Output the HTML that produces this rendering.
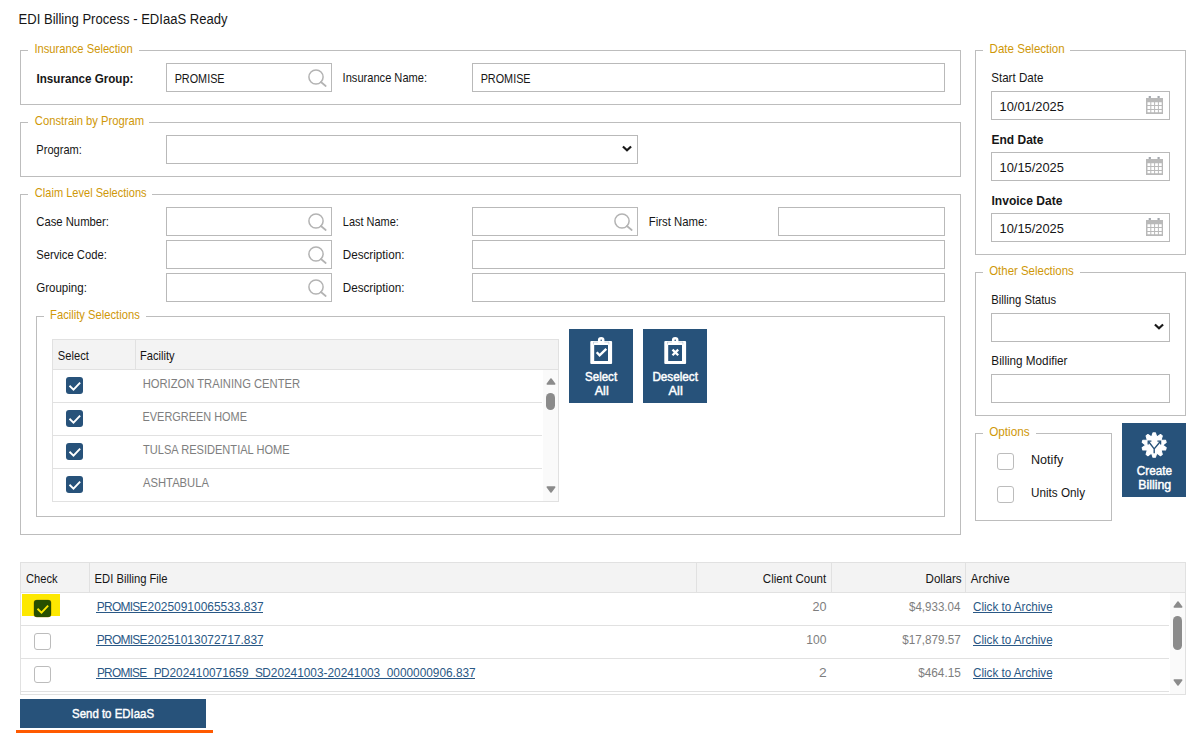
<!DOCTYPE html>
<html lang="en">
<head>
<meta charset="utf-8">
<title>EDI Billing Process - EDIaaS Ready</title>
<style>
html,body{margin:0;padding:0;background:#fff}
body{width:1199px;height:736px;position:relative;overflow:hidden;font-family:"Liberation Sans", sans-serif;font-size:13px;color:#161616}
.a{position:absolute;box-sizing:border-box}
.t{position:absolute;left:0;margin:0;white-space:pre;transform-origin:0 0;line-height:16px;height:16px;font-size:13px;font-weight:400;text-decoration:none}
.u{position:absolute;height:1px;background:#2a5885}
.fs{position:absolute;box-sizing:border-box;border:1px solid #bdbdbd}
.lg{position:absolute;background:#fff;height:3px}
.in{position:absolute;box-sizing:border-box;border:1px solid #b9b9b9;background:#fff;height:29px}
.grid{position:absolute;box-sizing:border-box;border:1px solid #e1e1e1;background:#fff}
.hd{position:absolute;box-sizing:border-box;background:#f3f3f3;border:1px solid #e1e1e1}
.ln{position:absolute;background:#e1e1e1}
.track{position:absolute;background:#fafafa}
.cb{position:absolute;box-sizing:border-box;width:17px;height:17px;border-radius:3px}
.cb.on{background:#27527a}
.cb.off{background:#fff;border:1px solid #bcbcbc}
.btn{position:absolute;background:#27527a}
svg{position:absolute;overflow:visible}
</style>
</head>
<body>
<header id="title">
<h1 class="t" style="top:11px;transform:translateX(18.56px) scaleX(0.9323);color:#161616;font-size:14px;">EDI Billing Process - EDIaaS Ready</h1>
</header>
<section id="ins" aria-label="Insurance Selection">
<div class="fs" style="left:20px;top:50px;width:941px;height:55px"></div>
<div class="lg" style="left:28px;top:49px;width:111px"></div>
<div class="in input" style="left:166px;top:63px;width:166px"></div>
<svg class="ico-search" style="left:305.65px;top:66.50px" width="22" height="22" viewBox="0 0 22 22"><circle cx="10" cy="10" r="7.1" fill="none" stroke="#b3b3b3" stroke-width="1.5"/><path d="M14.9 15 L19.7 19" stroke="#b3b3b3" stroke-width="1.7" fill="none" stroke-linecap="round"/></svg>
<div class="in input" style="left:472px;top:63px;width:473px"></div>
<span class="t legend" style="top:41px;transform:translateX(34.41px) scaleX(0.8613);color:#cf9808;">Insurance Selection</span>
<span class="t label" style="top:71px;transform:translateX(36.50px) scaleX(0.8949);color:#161616;font-weight:700;">Insurance Group:</span>
<span class="t value" style="top:71px;transform:translateX(174.64px) scaleX(0.8332);color:#161616;">PROMISE</span>
<span class="t label" style="top:70px;transform:translateX(342.60px) scaleX(0.8529);color:#161616;">Insurance Name:</span>
<span class="t value" style="top:71px;transform:translateX(480.64px) scaleX(0.8332);color:#161616;">PROMISE</span>
</section>
<section id="prog" aria-label="Constrain by Program">
<div class="fs" style="left:20px;top:122px;width:941px;height:55px"></div>
<div class="lg" style="left:28px;top:121px;width:121px"></div>
<div class="in select" style="left:166px;top:135px;width:472px"></div>
<svg class="ico-chevron" style="left:620.6px;top:145.0px" width="12" height="8" viewBox="0 0 12 8"><path d="M1.93 1.5 L6 5.3 L10.07 1.5" stroke="#1a1a1a" stroke-width="2.2" fill="none"/></svg>
<span class="t legend" style="top:113px;transform:translateX(34.85px) scaleX(0.8637);color:#cf9808;">Constrain by Program</span>
<span class="t label" style="top:142px;transform:translateX(36.34px) scaleX(0.8508);color:#161616;">Program:</span>
</section>
<section id="claim" aria-label="Claim Level Selections">
<div class="fs" style="left:20px;top:194px;width:941px;height:341px"></div>
<div class="lg" style="left:28px;top:193px;width:124px"></div>
<div class="in input" style="left:166px;top:207px;width:166px"></div>
<svg class="ico-search" style="left:305.65px;top:210.50px" width="22" height="22" viewBox="0 0 22 22"><circle cx="10" cy="10" r="7.1" fill="none" stroke="#b3b3b3" stroke-width="1.5"/><path d="M14.9 15 L19.7 19" stroke="#b3b3b3" stroke-width="1.7" fill="none" stroke-linecap="round"/></svg>
<div class="in input" style="left:472px;top:207px;width:166px"></div>
<svg class="ico-search" style="left:611.65px;top:210.50px" width="22" height="22" viewBox="0 0 22 22"><circle cx="10" cy="10" r="7.1" fill="none" stroke="#b3b3b3" stroke-width="1.5"/><path d="M14.9 15 L19.7 19" stroke="#b3b3b3" stroke-width="1.7" fill="none" stroke-linecap="round"/></svg>
<div class="in input" style="left:778px;top:207px;width:167px"></div>
<div class="in input" style="left:166px;top:240px;width:166px"></div>
<svg class="ico-search" style="left:305.65px;top:243.50px" width="22" height="22" viewBox="0 0 22 22"><circle cx="10" cy="10" r="7.1" fill="none" stroke="#b3b3b3" stroke-width="1.5"/><path d="M14.9 15 L19.7 19" stroke="#b3b3b3" stroke-width="1.7" fill="none" stroke-linecap="round"/></svg>
<div class="in input" style="left:472px;top:240px;width:473px"></div>
<div class="in input" style="left:166px;top:273px;width:166px"></div>
<svg class="ico-search" style="left:305.65px;top:276.50px" width="22" height="22" viewBox="0 0 22 22"><circle cx="10" cy="10" r="7.1" fill="none" stroke="#b3b3b3" stroke-width="1.5"/><path d="M14.9 15 L19.7 19" stroke="#b3b3b3" stroke-width="1.7" fill="none" stroke-linecap="round"/></svg>
<div class="in input" style="left:472px;top:273px;width:473px"></div>
<span class="t legend" style="top:185px;transform:translateX(34.87px) scaleX(0.8498);color:#cf9808;">Claim Level Selections</span>
<span class="t label" style="top:214px;transform:translateX(36.25px) scaleX(0.8679);color:#161616;">Case Number:</span>
<span class="t label" style="top:214px;transform:translateX(342.83px) scaleX(0.8423);color:#161616;">Last Name:</span>
<span class="t label" style="top:214px;transform:translateX(648.79px) scaleX(0.8729);color:#161616;">First Name:</span>
<span class="t label" style="top:247px;transform:translateX(36.29px) scaleX(0.8632);color:#161616;">Service Code:</span>
<span class="t label" style="top:247px;transform:translateX(342.73px) scaleX(0.8986);color:#161616;">Description:</span>
<span class="t label" style="top:280px;transform:translateX(36.23px) scaleX(0.8870);color:#161616;">Grouping:</span>
<span class="t label" style="top:280px;transform:translateX(342.73px) scaleX(0.8986);color:#161616;">Description:</span>
</section>
<section id="fac" aria-label="Facility Selections">
<div class="fs" style="left:36px;top:316px;width:909px;height:201px"></div>
<div class="lg" style="left:44px;top:315px;width:102px"></div>
<div class="grid" style="left:52px;top:339px;width:507px;height:163px"></div>
<div class="hd" style="left:52px;top:339px;width:507px;height:31px"></div>
<div class="ln" style="left:135px;top:340px;width:1px;height:29px"></div>
<div class="track" style="left:543px;top:370px;width:15px;height:131px"></div>
<div class="ln" style="left:53px;top:402px;width:489px;height:1px"></div>
<div class="ln" style="left:53px;top:435px;width:489px;height:1px"></div>
<div class="ln" style="left:53px;top:468px;width:489px;height:1px"></div>
<div class="cb on" role="checkbox" aria-checked="true" style="left:66px;top:377px"><svg style="left:0;top:0" width="17" height="17" viewBox="0 0 17 17"><path d="M3.5 8.8 L7.5 12.6 L14.15 5.65" stroke="#fff" stroke-width="1.9" fill="none"/></svg></div>
<div class="cb on" role="checkbox" aria-checked="true" style="left:66px;top:410px"><svg style="left:0;top:0" width="17" height="17" viewBox="0 0 17 17"><path d="M3.5 8.8 L7.5 12.6 L14.15 5.65" stroke="#fff" stroke-width="1.9" fill="none"/></svg></div>
<div class="cb on" role="checkbox" aria-checked="true" style="left:66px;top:443px"><svg style="left:0;top:0" width="17" height="17" viewBox="0 0 17 17"><path d="M3.5 8.8 L7.5 12.6 L14.15 5.65" stroke="#fff" stroke-width="1.9" fill="none"/></svg></div>
<div class="cb on" role="checkbox" aria-checked="true" style="left:66px;top:476px"><svg style="left:0;top:0" width="17" height="17" viewBox="0 0 17 17"><path d="M3.5 8.8 L7.5 12.6 L14.15 5.65" stroke="#fff" stroke-width="1.9" fill="none"/></svg></div>
<svg style="left:545.9px;top:377.8px" width="10" height="7" viewBox="0 0 10 7"><path d="M5 1.1 L8.7 5.9 L1.3 5.9 Z" fill="#8b8b8b" stroke="#8b8b8b" stroke-width="1.6" stroke-linejoin="round"/></svg>
<div class="a" style="left:546.0px;top:392.7px;width:9px;height:17.1px;border-radius:4.5px;background:#8b8b8b"></div>
<svg style="left:545.9px;top:486.2px" width="10" height="7" viewBox="0 0 10 7"><path d="M5 5.9 L8.7 1.1 L1.3 1.1 Z" fill="#8b8b8b" stroke="#8b8b8b" stroke-width="1.6" stroke-linejoin="round"/></svg>
<span class="t legend" style="top:307px;transform:translateX(50.05px) scaleX(0.8625);color:#cf9808;">Facility Selections</span>
<span class="t th" style="top:348px;transform:translateX(57.86px) scaleX(0.8573);color:#161616;">Select</span>
<span class="t th" style="top:348px;transform:translateX(140.06px) scaleX(0.8533);color:#161616;">Facility</span>
<span class="t td" style="top:376px;transform:translateX(142.63px) scaleX(0.8629);color:#7e7e7e;">HORIZON TRAINING CENTER</span>
<span class="t td" style="top:409px;transform:translateX(142.52px) scaleX(0.8403);color:#7e7e7e;">EVERGREEN HOME</span>
<span class="t td" style="top:442px;transform:translateX(142.98px) scaleX(0.8519);color:#7e7e7e;">TULSA RESIDENTIAL HOME</span>
<span class="t td" style="top:475px;transform:translateX(143.03px) scaleX(0.8635);color:#7e7e7e;">ASHTABULA</span>
</section>
<div id="selall" aria-label="Select All" role="button">
<div class="btn" style="left:569px;top:329px;width:64px;height:74px"></div>
<svg class="ico-clipboard" style="left:590px;top:336px" width="23" height="29" viewBox="0 0 23 29"><circle cx="11.2" cy="4.3" r="2.05" fill="none" stroke="#fff" stroke-width="2.5"/><path d="M1.3 5 H21.1 Q22.1 5 22.1 6 V27 Q22.1 28 21.1 28 H1.3 Q0.3 28 0.3 27 V6 Q0.3 5 1.3 5 Z M4.2 9.1 V24.9 H18 V9.1 Z" fill="#fff" fill-rule="evenodd"/><path d="M3.4 6.1 H8 M14.4 6.1 H19 M3.5 6.1 V8.4 M18.9 6.1 V8.4" stroke="#27527a" stroke-width="0.5" opacity="0.45" fill="none"/><path d="M6.7 16.2 L9.6 19.3 L16.3 12.8" stroke="#fff" stroke-width="2.4" fill="none"/></svg>
<span class="t" style="top:369px;transform:translateX(585.08px) scaleX(0.9594);color:#fff;font-size:12px;-webkit-text-stroke:0.45px #fff;">Select</span>
<span class="t" style="top:383px;transform:translateX(594.78px) scaleX(1.0421);color:#fff;font-size:12px;-webkit-text-stroke:0.45px #fff;">All</span>
</div>
<div id="deselall" aria-label="Deselect All" role="button">
<div class="btn" style="left:643px;top:329px;width:64px;height:74px"></div>
<svg class="ico-clipboard" style="left:664px;top:336px" width="23" height="29" viewBox="0 0 23 29"><circle cx="11.2" cy="4.3" r="2.05" fill="none" stroke="#fff" stroke-width="2.5"/><path d="M1.3 5 H21.1 Q22.1 5 22.1 6 V27 Q22.1 28 21.1 28 H1.3 Q0.3 28 0.3 27 V6 Q0.3 5 1.3 5 Z M4.2 9.1 V24.9 H18 V9.1 Z" fill="#fff" fill-rule="evenodd"/><path d="M3.4 6.1 H8 M14.4 6.1 H19 M3.5 6.1 V8.4 M18.9 6.1 V8.4" stroke="#27527a" stroke-width="0.5" opacity="0.45" fill="none"/><path d="M8.5 13.6 L14.2 19.3 M14.2 13.6 L8.5 19.3" stroke="#fff" stroke-width="2.3" fill="none"/></svg>
<span class="t" style="top:369px;transform:translateX(652.39px) scaleX(0.9763);color:#fff;font-size:12px;-webkit-text-stroke:0.45px #fff;">Deselect</span>
<span class="t" style="top:383px;transform:translateX(668.58px) scaleX(1.0615);color:#fff;font-size:12px;-webkit-text-stroke:0.45px #fff;">All</span>
</div>
<section id="date" aria-label="Date Selection">
<div class="fs" style="left:975px;top:50px;width:211px;height:205px"></div>
<div class="lg" style="left:983px;top:49px;width:87px"></div>
<div class="in input" style="left:991px;top:91px;width:179px"></div>
<svg class="ico-calendar" style="left:1146px;top:96px" width="17" height="18" viewBox="0 0 17 18"><rect x="2.7" y="0" width="2.2" height="3" fill="#a4a8ae"/><rect x="11.5" y="0" width="2.2" height="3" fill="#a4a8ae"/><rect x="0" y="2" width="17" height="16" fill="#b9b9b9"/><path d="M1.5 6.2h2.8v2.9h-2.8zM5.3 6.2h2.8v2.9h-2.8zM9.1 6.2h2.8v2.9h-2.8zM12.9 6.2h2.8v2.9h-2.8zM1.5 10.1h2.8v2.9h-2.8zM5.3 10.1h2.8v2.9h-2.8zM9.1 10.1h2.8v2.9h-2.8zM12.9 10.1h2.8v2.9h-2.8zM1.5 14.0h2.8v2.2h-2.8zM5.3 14.0h2.8v2.2h-2.8zM9.1 14.0h2.8v2.2h-2.8zM12.9 14.0h2.8v2.2h-2.8z" fill="#fff"/></svg>
<div class="in input" style="left:991px;top:152px;width:179px"></div>
<svg class="ico-calendar" style="left:1146px;top:157px" width="17" height="18" viewBox="0 0 17 18"><rect x="2.7" y="0" width="2.2" height="3" fill="#a4a8ae"/><rect x="11.5" y="0" width="2.2" height="3" fill="#a4a8ae"/><rect x="0" y="2" width="17" height="16" fill="#b9b9b9"/><path d="M1.5 6.2h2.8v2.9h-2.8zM5.3 6.2h2.8v2.9h-2.8zM9.1 6.2h2.8v2.9h-2.8zM12.9 6.2h2.8v2.9h-2.8zM1.5 10.1h2.8v2.9h-2.8zM5.3 10.1h2.8v2.9h-2.8zM9.1 10.1h2.8v2.9h-2.8zM12.9 10.1h2.8v2.9h-2.8zM1.5 14.0h2.8v2.2h-2.8zM5.3 14.0h2.8v2.2h-2.8zM9.1 14.0h2.8v2.2h-2.8zM12.9 14.0h2.8v2.2h-2.8z" fill="#fff"/></svg>
<div class="in input" style="left:991px;top:213px;width:179px"></div>
<svg class="ico-calendar" style="left:1146px;top:218px" width="17" height="18" viewBox="0 0 17 18"><rect x="2.7" y="0" width="2.2" height="3" fill="#a4a8ae"/><rect x="11.5" y="0" width="2.2" height="3" fill="#a4a8ae"/><rect x="0" y="2" width="17" height="16" fill="#b9b9b9"/><path d="M1.5 6.2h2.8v2.9h-2.8zM5.3 6.2h2.8v2.9h-2.8zM9.1 6.2h2.8v2.9h-2.8zM12.9 6.2h2.8v2.9h-2.8zM1.5 10.1h2.8v2.9h-2.8zM5.3 10.1h2.8v2.9h-2.8zM9.1 10.1h2.8v2.9h-2.8zM12.9 10.1h2.8v2.9h-2.8zM1.5 14.0h2.8v2.2h-2.8zM5.3 14.0h2.8v2.2h-2.8zM9.1 14.0h2.8v2.2h-2.8zM12.9 14.0h2.8v2.2h-2.8z" fill="#fff"/></svg>
<span class="t legend" style="top:41px;transform:translateX(989.59px) scaleX(0.8884);color:#cf9808;">Date Selection</span>
<span class="t label" style="top:70px;transform:translateX(991.24px) scaleX(0.8898);color:#161616;">Start Date</span>
<span class="t value" style="top:99px;transform:translateX(999.48px) scaleX(0.9908);color:#161616;">10/01/2025</span>
<span class="t label" style="top:132px;transform:translateX(991.50px) scaleX(0.9229);color:#161616;font-weight:700;">End Date</span>
<span class="t value" style="top:160px;transform:translateX(999.48px) scaleX(0.9908);color:#161616;">10/15/2025</span>
<span class="t label" style="top:193px;transform:translateX(991.47px) scaleX(0.9276);color:#161616;font-weight:700;">Invoice Date</span>
<span class="t value" style="top:221px;transform:translateX(999.48px) scaleX(0.9908);color:#161616;">10/15/2025</span>
</section>
<section id="other" aria-label="Other Selections">
<div class="fs" style="left:975px;top:272px;width:211px;height:144px"></div>
<div class="lg" style="left:983px;top:271px;width:97px"></div>
<div class="in select" style="left:991px;top:313px;width:179px"></div>
<svg class="ico-chevron" style="left:1152.6px;top:323.0px" width="12" height="8" viewBox="0 0 12 8"><path d="M1.93 1.5 L6 5.3 L10.07 1.5" stroke="#1a1a1a" stroke-width="2.2" fill="none"/></svg>
<div class="in input" style="left:991px;top:374px;width:179px"></div>
<span class="t legend" style="top:263px;transform:translateX(989.22px) scaleX(0.8796);color:#cf9808;">Other Selections</span>
<span class="t label" style="top:292px;transform:translateX(991.31px) scaleX(0.8638);color:#161616;">Billing Status</span>
<span class="t label" style="top:353px;transform:translateX(991.37px) scaleX(0.9005);color:#161616;">Billing Modifier</span>
</section>
<section id="opts" aria-label="Options">
<div class="fs" style="left:975px;top:433px;width:137px;height:88px"></div>
<div class="lg" style="left:983px;top:432px;width:53px"></div>
<div class="cb off" role="checkbox" aria-checked="false" style="left:997px;top:453px"></div>
<div class="cb off" role="checkbox" aria-checked="false" style="left:997px;top:486px"></div>
<span class="t legend" style="top:424px;transform:translateX(989.17px) scaleX(0.9045);color:#cf9808;">Options</span>
<span class="t label" style="top:452px;transform:translateX(1031.04px) scaleX(0.9667);color:#161616;">Notify</span>
<span class="t label" style="top:485px;transform:translateX(1031.06px) scaleX(0.9000);color:#161616;">Units Only</span>
</section>
<div id="create" aria-label="Create Billing" role="button">
<div class="btn" style="left:1122px;top:423px;width:64px;height:74px"></div>
<svg class="ico-gear" style="left:1141px;top:432px" width="27" height="27" viewBox="0 0 27 27"><polygon points="10.8,4.5 12.0,0.9 14.4,0.9 15.6,4.5 16.3,4.8 19.5,2.5 21.3,3.9 20.2,7.6 20.6,8.2 24.5,8.2 25.2,10.4 22.1,12.7 22.1,13.5 25.2,15.8 24.5,18.0 20.6,18.0 20.2,18.6 21.3,22.3 19.5,23.7 16.3,21.4 15.6,21.7 14.4,25.3 12.0,25.3 10.8,21.7 10.1,21.4 6.9,23.7 5.1,22.3 6.2,18.6 5.8,18.0 1.9,18.0 1.2,15.8 4.3,13.5 4.3,12.7 1.2,10.4 1.9,8.2 5.8,8.2 6.2,7.6 5.1,3.9 6.9,2.5 10.1,4.8" fill="#fff" stroke="#fff" stroke-width="1.1" stroke-linejoin="round"/><path d="M13.2 21.3 V16.9 L7.7 9.8 M13.2 16.9 L19.1 9.8" stroke="#27527a" stroke-width="1.4" fill="none"/><path d="M7.2 12.4 V9.2 H10.4 M19.6 12.4 V9.2 H16.4" stroke="#27527a" stroke-width="1.3" fill="none"/></svg>
<span class="t" style="top:463px;transform:translateX(1136.81px) scaleX(0.9764);color:#fff;font-size:12px;-webkit-text-stroke:0.45px #fff;">Create</span>
<span class="t" style="top:477px;transform:translateX(1138.17px) scaleX(1.0322);color:#fff;font-size:12px;-webkit-text-stroke:0.45px #fff;">Billing</span>
</div>
<section id="files" aria-label="EDI Billing Files">
<div class="grid" style="left:20px;top:562px;width:1166px;height:133px"></div>
<div class="hd" style="left:20px;top:562px;width:1166px;height:31px"></div>
<div class="ln" style="left:89px;top:563px;width:1px;height:29px"></div>
<div class="ln" style="left:696px;top:563px;width:1px;height:29px"></div>
<div class="ln" style="left:831px;top:563px;width:1px;height:29px"></div>
<div class="ln" style="left:965px;top:563px;width:1px;height:29px"></div>
<div class="track" style="left:1170px;top:593px;width:15px;height:101px"></div>
<div class="ln" style="left:21px;top:625px;width:1148px;height:1px"></div>
<div class="ln" style="left:21px;top:658px;width:1148px;height:1px"></div>
<div class="ln" style="left:21px;top:691px;width:1148px;height:1px"></div>
<div class="a hl" style="left:22px;top:594px;width:38px;height:22px;background:#fde800"></div>
<div class="cb" role="checkbox" aria-checked="true" style="left:34px;top:600px;background:#274f00;box-shadow:0 0 0 0.3px #a67c00"><svg style="left:0;top:0" width="17" height="17" viewBox="0 0 17 17"><path d="M3.5 8.8 L7.5 12.6 L14.15 5.65" stroke="#fde800" stroke-width="1.9" fill="none"/></svg></div>
<div class="cb off" role="checkbox" aria-checked="false" style="left:34px;top:633px"></div>
<div class="cb off" role="checkbox" aria-checked="false" style="left:34px;top:666px"></div>
<svg style="left:1172.9px;top:600.8px" width="10" height="7" viewBox="0 0 10 7"><path d="M5 1.1 L8.7 5.9 L1.3 5.9 Z" fill="#8b8b8b" stroke="#8b8b8b" stroke-width="1.6" stroke-linejoin="round"/></svg>
<div class="a" style="left:1173.0px;top:616px;width:9px;height:33.7px;border-radius:4.5px;background:#8b8b8b"></div>
<svg style="left:1172.9px;top:679px" width="10" height="7" viewBox="0 0 10 7"><path d="M5 5.9 L8.7 1.1 L1.3 1.1 Z" fill="#8b8b8b" stroke="#8b8b8b" stroke-width="1.6" stroke-linejoin="round"/></svg>
<span class="t th" style="top:571px;transform:translateX(26.06px) scaleX(0.8566);color:#161616;">Check</span>
<span class="t th" style="top:571px;transform:translateX(94.61px) scaleX(0.8635);color:#161616;">EDI Billing File</span>
<span class="t th" style="top:571px;transform:translateX(762.84px) scaleX(0.8861);color:#161616;">Client Count</span>
<span class="t th" style="top:571px;transform:translateX(925.54px) scaleX(0.8913);color:#161616;">Dollars</span>
<span class="t th" style="top:571px;transform:translateX(970.74px) scaleX(0.8984);color:#161616;">Archive</span>
<a class="t" style="top:599px;transform:translateX(96.87px) scaleX(0.9183);color:#2a5885;"><span style="letter-spacing:-.8px">PROMIS</span>E20250910065533.837</a>
<i class="u" style="left:96.1px;top:612px;width:167.3px"></i>
<span class="t td" style="top:599px;transform:translateX(812.38px) scaleX(0.9686);color:#7e7e7e;">20</span>
<span class="t td" style="top:599px;transform:translateX(909.00px) scaleX(0.8892);color:#7e7e7e;">$4,933.04</span>
<a class="t" style="top:599px;transform:translateX(973.04px) scaleX(0.8958);color:#2a5885;">Click to Archive</a>
<i class="u" style="left:972.9px;top:612px;width:79.5px"></i>
<a class="t" style="top:632px;transform:translateX(96.87px) scaleX(0.9183);color:#2a5885;"><span style="letter-spacing:-.8px">PROMIS</span>E20251013072717.837</a>
<i class="u" style="left:96.1px;top:645px;width:167.3px"></i>
<span class="t td" style="top:632px;transform:translateX(806.32px) scaleX(0.9298);color:#7e7e7e;">100</span>
<span class="t td" style="top:632px;transform:translateX(902.31px) scaleX(0.8965);color:#7e7e7e;">$17,879.57</span>
<a class="t" style="top:632px;transform:translateX(973.04px) scaleX(0.8958);color:#2a5885;">Click to Archive</a>
<i class="u" style="left:972.9px;top:645px;width:79.5px"></i>
<a class="t" style="top:665px;transform:translateX(96.90px) scaleX(0.9110);color:#2a5885;"><span style="letter-spacing:-.8px">PROMIS</span>E<span style="position:relative;top:-1px">_</span><span style="letter-spacing:-.8px">P</span>D202410071659<span style="position:relative;top:-1px">_</span><span style="letter-spacing:-.8px">S</span>D20241003-20241003<span style="position:relative;top:-1px">_</span>0000000906.837</a>
<i class="u" style="left:96.1px;top:678px;width:379.1px"></i>
<span class="t td" style="top:665px;transform:translateX(818.89px) scaleX(1.0614);color:#7e7e7e;">2</span>
<span class="t td" style="top:665px;transform:translateX(918.15px) scaleX(0.9079);color:#7e7e7e;">$464.15</span>
<a class="t" style="top:665px;transform:translateX(973.04px) scaleX(0.8958);color:#2a5885;">Click to Archive</a>
<i class="u" style="left:972.9px;top:678px;width:79.5px"></i>
</section>
<div id="send" aria-label="Send to EDIaaS" role="button">
<div class="btn" style="left:20px;top:699px;width:186px;height:28.5px"></div>
<div class="a" style="left:16px;top:729.6px;width:197px;height:3.7px;background:#ff5a00"></div>
<span class="t" style="top:706px;transform:translateX(72.06px) scaleX(0.8790);color:#fff;-webkit-text-stroke:0.45px #fff;">Send to EDIaaS</span>
</div>
</body>
</html>
